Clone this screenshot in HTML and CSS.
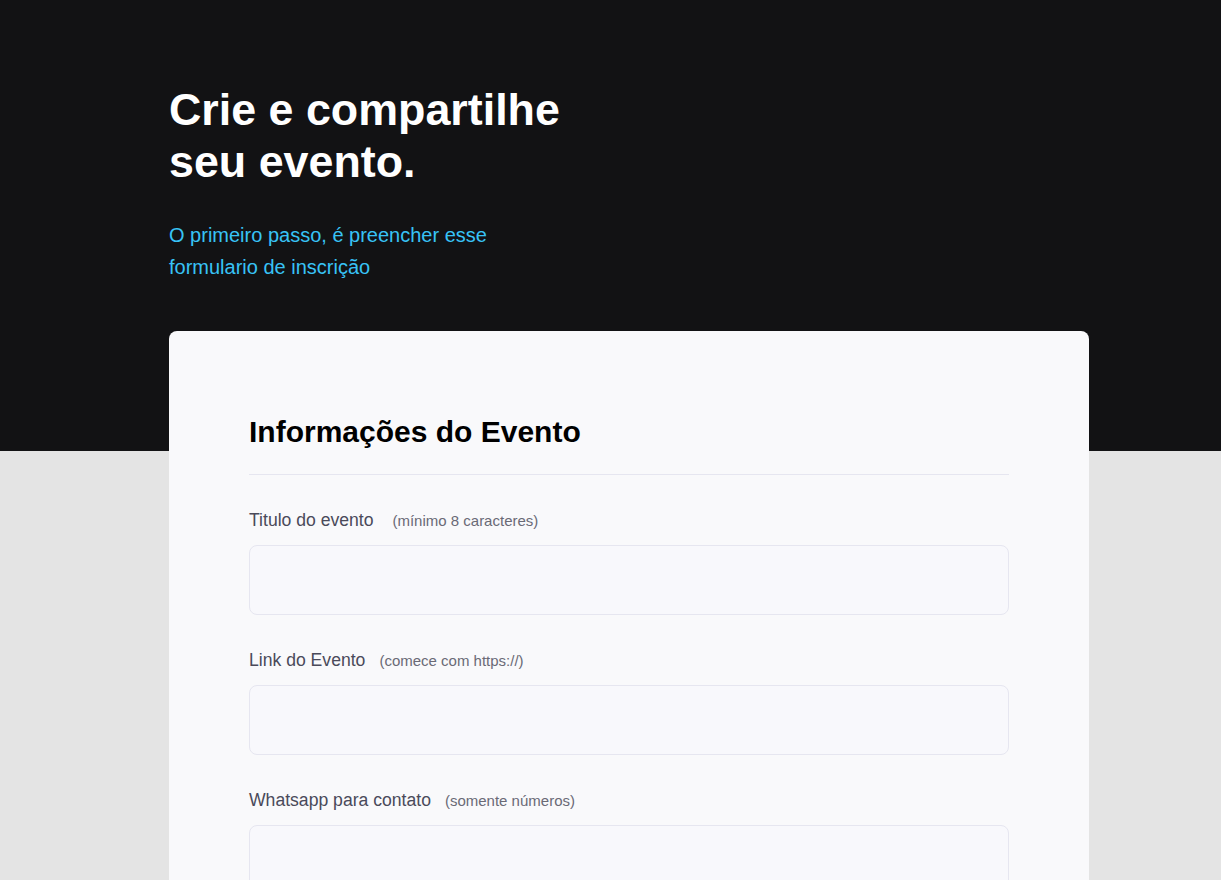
FILE: index.html
```html
<!DOCTYPE html>
<html lang="pt-BR">
<head>
<meta charset="utf-8">
<title>Crie e compartilhe seu evento</title>
<link rel="stylesheet" href="styles.css">
</head>
<body>
<header class="hero">
  <div class="wrap">
    <h1 class="hero-title">Crie e compartilhe<br>seu evento.</h1>
    <p class="hero-sub">O primeiro passo, é preencher esse formulario de inscrição</p>
  </div>
</header>
<main class="wrap">
  <form class="card">
    <fieldset class="group">
      <legend class="group-title">Informações do Evento</legend>
      <div class="field">
        <label class="label" for="titulo">Titulo do evento <span class="hint">(mínimo 8 caracteres)</span></label>
        <input class="input" id="titulo" type="text">
      </div>
      <div class="field">
        <label class="label" for="link">Link do Evento<span class="hint">(comece com https://)</span></label>
        <input class="input" id="link" type="text">
      </div>
      <div class="field">
        <label class="label" for="whats">Whatsapp para contato<span class="hint">(somente números)</span></label>
        <input class="input" id="whats" type="text">
      </div>
    </fieldset>
  </form>
</main>
</body>
</html>
```
FILE: styles.css
```css
* { box-sizing: border-box; }
html, body { margin: 0; padding: 0; }
body {
  background: #e4e4e4;
  font-family: "Liberation Sans", Arial, sans-serif;
}
.wrap {
  width: 920px;
  margin-left: 169px;
}
.hero {
  background: #121214;
  padding-top: 84px;
  padding-bottom: 168px;
}
.hero-title {
  margin: 0;
  color: #ffffff;
  font-size: 44.8px;
  line-height: 51.5px;
  font-weight: 700;
}
.hero-sub {
  margin: 32px 0 0;
  max-width: 330px;
  color: #38c3f6;
  font-size: 20px;
  line-height: 32px;
}
.card {
  margin-top: -120px;
  background: #f9f9fb;
  border-radius: 8px;
  padding: 84px 80px 80px;
}
.group {
  border: 0;
  margin: 0;
  padding: 0;
  min-width: 0;
}
.group-title {
  display: block;
  width: 100%;
  padding: 0 0 25px;
  border-bottom: 1px solid #e6e6f0;
  font-size: 30px;
  line-height: 34px;
  font-weight: 700;
  color: #000000;
}
.field {
  margin-top: 35px;
}
.label {
  display: block;
  color: #4a4a5a;
  font-size: 17.6px;
  line-height: 21px;
  margin-bottom: 14px;
}
.hint {
  margin-left: 14px;
  color: #6a6a76;
  font-size: 15px;
}
.input {
  display: block;
  width: 100%;
  height: 70px;
  border: 1px solid #e6e6f0;
  border-radius: 8px;
  background: #f8f8fc;
  padding: 0 24px;
  font-family: inherit;
  font-size: 16px;
  outline: none;
}
```
